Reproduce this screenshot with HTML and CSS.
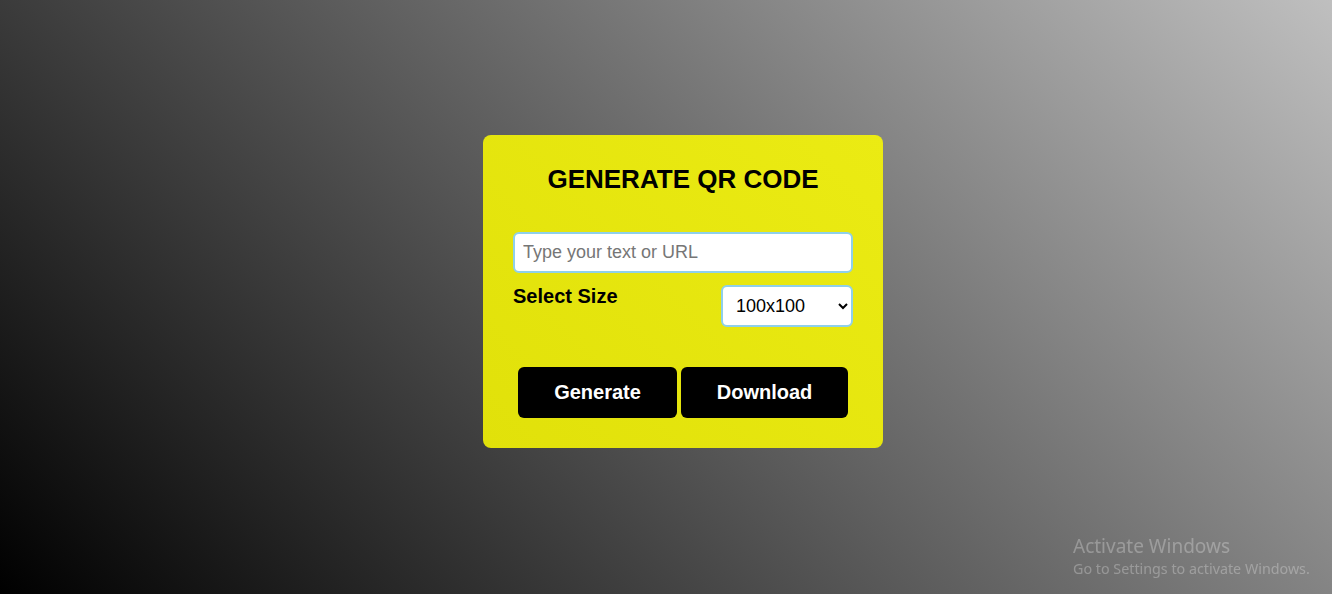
FILE: index.html
```html
<!DOCTYPE html>
<html lang="en">
<head>
<meta charset="utf-8">
<title>QR Code Generator</title>
<link rel="stylesheet" href="styles.css">
</head>
<body>
<main class="stage">
  <div class="card">
    <h1 class="title">GENERATE QR CODE</h1>
    <input class="text-input" type="text" placeholder="Type your text or URL">
    <div class="size-row">
      <span class="size-label">Select Size</span>
      <select class="size-select">
        <option>100x100</option>
        <option>200x200</option>
        <option>300x300</option>
      </select>
    </div>
    <div class="actions">
      <button class="btn btn-generate">Generate</button>
      <button class="btn btn-download">Download</button>
    </div>
  </div>
</main>
<div class="watermark">
  <div class="wm-title">Activate Windows</div>
  <div class="wm-sub">Go to Settings to activate Windows.</div>
</div>
</body>
</html>
```
FILE: styles.css
```css
html, body {
  margin: 0;
  height: 100%;
}
body {
  background: linear-gradient(45deg, #000000, #bfbfbf);
  font-family: "Liberation Sans", Arial, sans-serif;
  overflow: hidden;
}
.stage {
  height: 100%;
  display: flex;
  align-items: center;
  justify-content: center;
  box-sizing: border-box;
  padding: 0 0 11px 34px;
}
.card {
  width: 400px;
  box-sizing: border-box;
  padding: 30px;
  border-radius: 8px;
  background: linear-gradient(45deg, #e1e10a, #ebeb13);
}
.title {
  margin: 0 0 38px;
  font-size: 26px;
  font-weight: bold;
  text-align: center;
  color: #000;
  line-height: 29px;
}
.text-input {
  display: block;
  width: 100%;
  height: 41px;
  box-sizing: border-box;
  border: 2px solid #8fd0ea;
  border-radius: 6px;
  padding: 0 8px;
  font-family: "Liberation Sans", Arial, sans-serif;
  font-size: 18px;
  background: #fff;
  outline: none;
}
.text-input::placeholder {
  color: #767676;
}
.size-row {
  display: flex;
  justify-content: space-between;
  align-items: flex-start;
  margin-top: 12px;
}
.size-label {
  font-size: 20px;
  font-weight: bold;
  line-height: 23px;
  color: #000;
}
.size-select {
  width: 132px;
  height: 42px;
  box-sizing: border-box;
  border: 2px solid #8fd0ea;
  border-radius: 6px;
  padding: 0 6px 0 9px;
  font-family: "Liberation Sans", Arial, sans-serif;
  font-size: 18px;
  background: #fff;
  color: #000;
  outline: none;
}
.actions {
  display: flex;
  justify-content: center;
  gap: 4px;
  margin-top: 40px;
}
.btn {
  height: 51px;
  border: none;
  border-radius: 6px;
  background: #000;
  color: #fff;
  font-family: "Liberation Sans", Arial, sans-serif;
  font-size: 20px;
  font-weight: bold;
  cursor: pointer;
}
.btn-generate {
  width: 159px;
}
.btn-download {
  width: 167px;
}
.watermark {
  position: fixed;
  left: 1073px;
  top: 534px;
  color: rgba(255, 255, 255, 0.28);
  font-family: "Noto Sans", "Open Sans", sans-serif;
}
.wm-title {
  font-size: 19px;
  line-height: 25px;
}
.wm-sub {
  font-size: 14.3px;
  line-height: 19px;
}
```
